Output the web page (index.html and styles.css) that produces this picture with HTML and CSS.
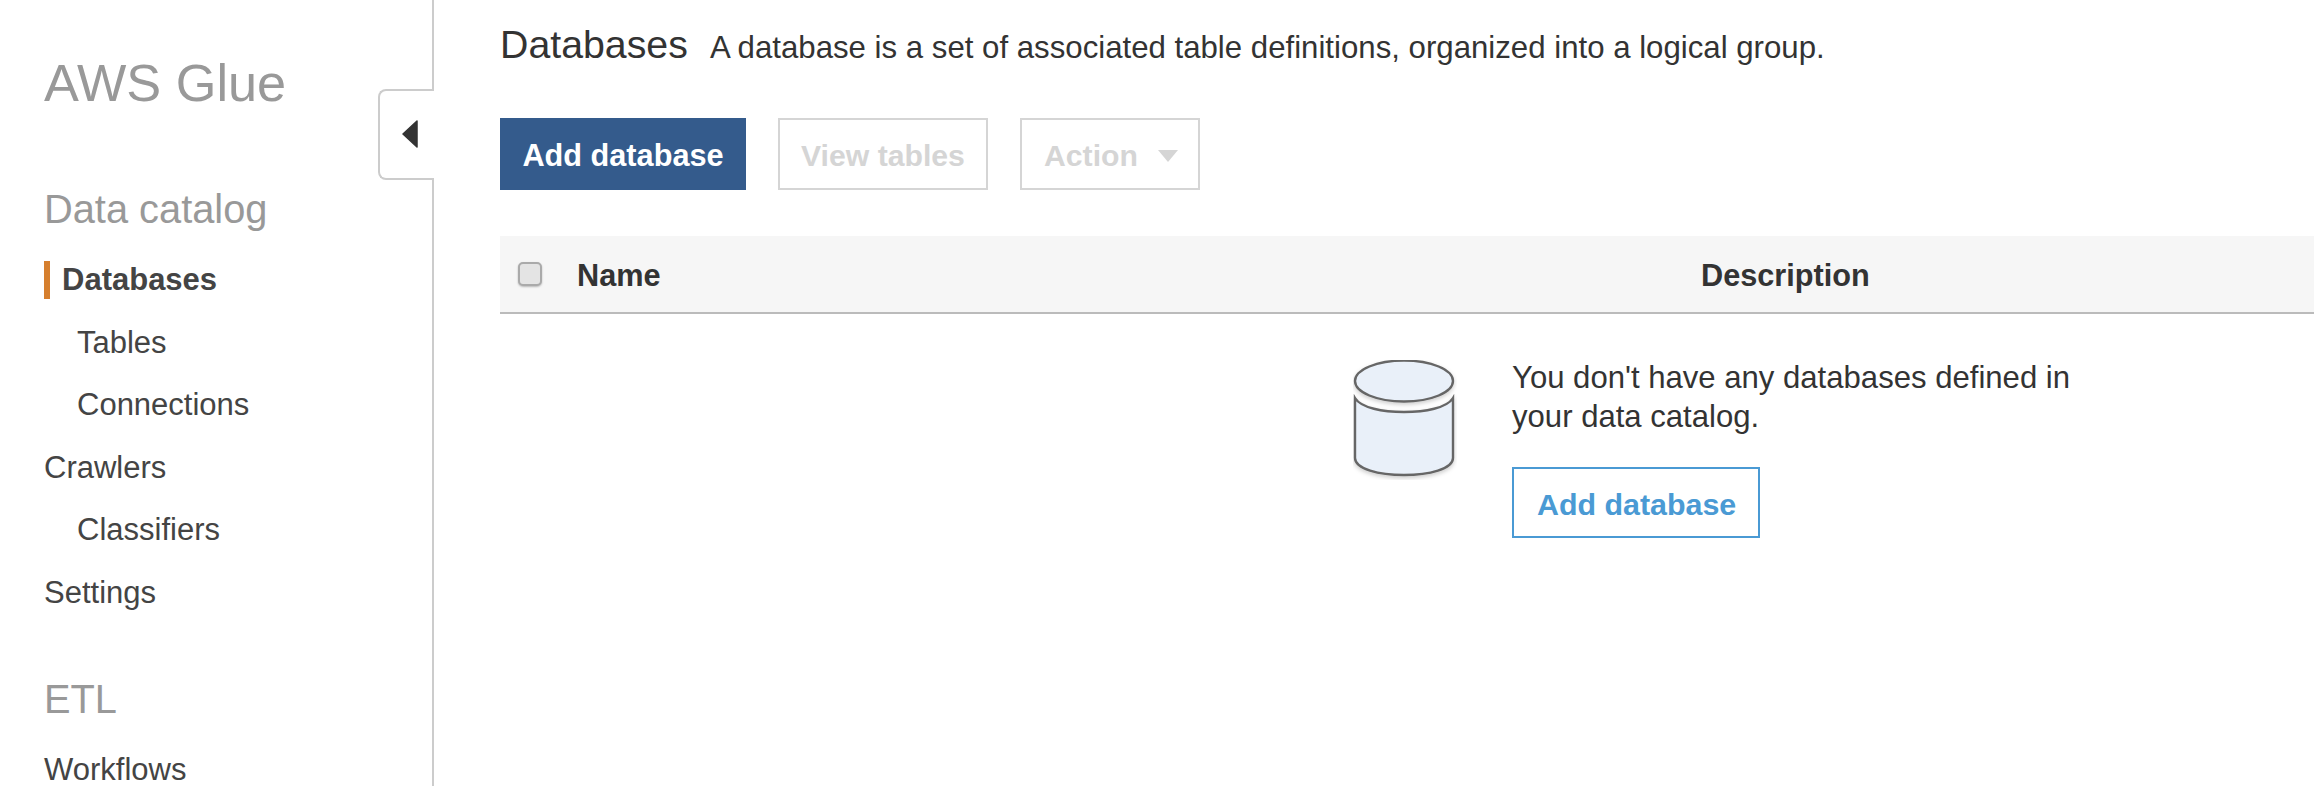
FILE: index.html
```html
<!DOCTYPE html>
<html lang="en">
<head>
<meta charset="utf-8">
<title>AWS Glue - Databases</title>
<link rel="stylesheet" href="styles.css">
</head>
<body>
<div class="app">
  <aside class="sidebar">
    <h1 class="brand">AWS Glue</h1>
    <h2 class="section">Data catalog</h2>
    <nav class="nav">
      <a class="nav-item active">Databases</a>
      <a class="nav-item sub">Tables</a>
      <a class="nav-item sub">Connections</a>
      <a class="nav-item">Crawlers</a>
      <a class="nav-item sub">Classifiers</a>
      <a class="nav-item">Settings</a>
    </nav>
    <h2 class="section etl">ETL</h2>
    <nav class="nav etl-nav">
      <a class="nav-item">Workflows</a>
    </nav>
    <div class="collapse">
      <svg class="collapse-icon" width="16" height="28" viewBox="0 0 16 28"><path d="M15 1 L1 14 L15 27 Z" fill="#333" stroke="#333" stroke-width="1.5" stroke-linejoin="round"/></svg>
    </div>
  </aside>
  <main class="main">
    <header class="head">
      <span class="title">Databases</span>
      <span class="subtitle">A database is a set of associated table definitions, organized into a logical group.</span>
    </header>
    <div class="toolbar">
      <button class="btn primary">Add database</button>
      <button class="btn disabled view">View tables</button>
      <button class="btn disabled action">Action<span class="caret"></span></button>
    </div>
    <div class="thead">
      <span class="checkbox"></span>
      <span class="th name">Name</span>
      <span class="th">Description</span>
    </div>
    <div class="empty">
      <svg class="db-icon" width="104" height="120" viewBox="0 0 104 120">
        <defs><filter id="soft" x="-10%" y="-10%" width="120%" height="125%"><feDropShadow dx="0" dy="2" stdDeviation="2" flood-color="#000" flood-opacity=".2"/></filter></defs>
        <g filter="url(#soft)" stroke="#666" stroke-width="2.4" fill="#e9f0f9">
          <path d="M2 38 C8 48 30 52 51 52 C72 52 94 48 100 38 V98 C100 109 76 115 51 115 C26 115 2 109 2 98 Z"/>
          <ellipse cx="51" cy="21" rx="49" ry="20.5"/>
        </g>
      </svg>
      <div class="empty-body">
        <p class="empty-text">You don't have any databases defined in your data catalog.</p>
        <button class="btn outline">Add database</button>
      </div>
    </div>
  </main>
</div>
</body>
</html>
```

FILE: styles.css
```css
* { box-sizing: border-box; }
html, body { margin: 0; height: 100%; overflow: hidden; background: #fff; }
body { font-family: "Liberation Sans", Arial, sans-serif; color: #333; }

.app { display: flex; height: 786px; overflow: hidden; }

.sidebar {
  position: relative;
  flex: 0 0 434px;
  border-right: 2px solid #ccc;
  padding: 55px 0 0 44px;
}
.brand { margin: 0; font-size: 52.3px; line-height: 56px; font-weight: 400; color: #999; }
.section { margin: 73px 0 0 0; font-size: 39.8px; line-height: 50px; font-weight: 400; color: #999; }
.section.etl { margin-top: 38px; }

.nav { display: flex; flex-direction: column; margin-top: 27px; }
.etl-nav { margin-top: 29px; }
.nav-item {
  font-size: 31px;
  line-height: 38px;
  height: 38px;
  margin-bottom: 24.5px;
  color: #444;
}
.etl-nav .nav-item { line-height: 34px; height: 34px; margin-bottom: 0; }
.nav-item.sub { padding-left: 33px; }
.nav-item.active {
  font-weight: 700;
  padding-left: 12px;
  border-left: 6px solid #d67f2e;
  color: #444;
}

.collapse {
  position: absolute;
  top: 89px;
  right: -2px;
  width: 56px;
  height: 91px;
  display: flex;
  align-items: center;
  padding: 0 0 2px 22px;
  background: #fff;
  border: 2px solid #ccc;
  border-right: 0;
  border-radius: 8px 0 0 8px;
}

.main { flex: 1; min-width: 0; padding: 0 0 0 66px; }

.head { display: flex; align-items: baseline; height: 118px; padding-top: 21px; }
.title { font-size: 39.3px; line-height: 46px; color: #333; }
.subtitle { margin-left: 22px; font-size: 31.2px; line-height: 46px; color: #333; }

.toolbar { display: flex; gap: 32px; height: 72px; }
.btn {
  height: 72px;
  padding: 3px 20px 0;
  font-family: inherit;
  font-size: 30.7px;
  background: #fff;
  border: 2px solid transparent;
}
.btn.primary { flex: 0 0 246px; background: #345b8c; border-color: #345b8c; color: #fff; font-weight: 700; }
.btn.disabled { font-size: 30.2px; border-color: #d5d5d5; color: #d5d5d5; font-weight: 700; text-align: left; }
.btn.view { flex: 0 0 210px; padding-left: 21px; padding-right: 0; }
.btn.action { flex: 0 0 180px; padding-left: 22px; padding-right: 0; }
.btn.outline { font-size: 30.4px; border-color: #4a9ad4; color: #4a9ad4; font-weight: 700; height: 71px; }
.caret {
  display: inline-block;
  margin-left: 20px;
  vertical-align: 4px;
  border-left: 10px solid transparent;
  border-right: 10px solid transparent;
  border-top: 12px solid #d5d5d5;
}

.thead {
  display: flex;
  align-items: center;
  height: 78px;
  margin-top: 46px;
  padding: 3px 0 0 18px;
  background: #f6f6f6;
  border-bottom: 2px solid #bbb;
}
.checkbox {
  flex: none;
  width: 24px;
  height: 24px;
  margin-top: -3px;
  background: #e4e4e4;
  border: 2px solid #aaa;
  border-radius: 5px;
  box-shadow: 0 1px 2px rgba(0,0,0,.25);
}
.th { font-size: 30.7px; font-weight: 700; color: #333; }
.th.name { margin-left: 35px; width: 1124px; }

.empty { display: flex; align-items: flex-start; padding: 46px 0 0 853px; }
.db-icon { flex: none; }
.empty-body { margin-left: 55px; width: 580px; margin-top: -1px; }
.empty-text { margin: 0; font-size: 31.1px; line-height: 38.5px; color: #333; }
.btn.outline { margin-top: 31px; padding: 3px 22px 0 23px; }
```
